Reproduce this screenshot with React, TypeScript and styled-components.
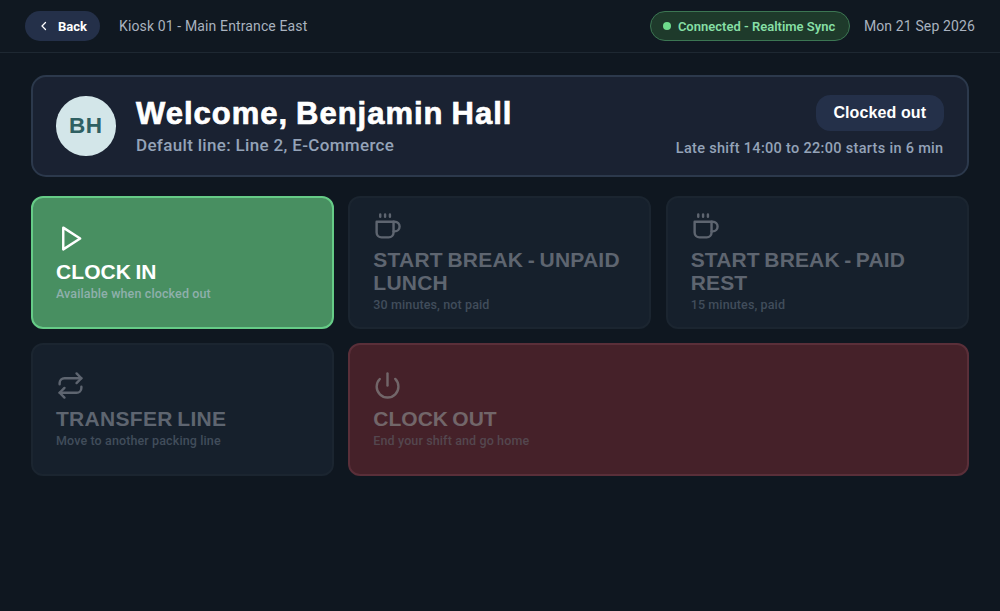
import type { ReactNode } from "react";
import styled, { createGlobalStyle } from "styled-components";

const GlobalStyle = createGlobalStyle`
  * {
    box-sizing: border-box;
  }

  body {
    margin: 0;
    background: #0f1720;
    font-family: Roboto, "Noto Sans", sans-serif;
    color: #ffffff;
  }
`;

const Page = styled.div`
  min-height: 100vh;
  overflow: hidden;
`;

const TopBar = styled.header`
  display: flex;
  align-items: center;
  justify-content: space-between;
  height: 53px;
  padding: 0 25px;
  background: #101821;
  border-bottom: 1px solid #1e2832;
`;

const TopBarGroup = styled.div<{ $gap: number }>`
  display: flex;
  align-items: center;
  gap: ${({ $gap }) => $gap}px;
`;

const BackButton = styled.button`
  display: flex;
  align-items: center;
  gap: 8px;
  width: 75px;
  height: 30px;
  padding: 0 0 0 13px;
  border: none;
  border-radius: 15px;
  background: #243049;
  color: #ffffff;
  font-family: inherit;
  font-size: 13px;
  font-weight: 700;
`;

const TopBarText = styled.span`
  color: #a9b2bf;
  font-size: 14px;
  letter-spacing: 0.13px;
  white-space: nowrap;
`;

const SyncBadge = styled.div`
  display: flex;
  align-items: center;
  gap: 7px;
  width: 200px;
  height: 30px;
  padding-left: 12px;
  border: 1px solid #3c7653;
  border-radius: 15px;
  background: #1e3a2b;
  color: #86dfa5;
  font-size: 13px;
  font-weight: 600;
  white-space: nowrap;
`;

const SyncDot = styled.span`
  width: 8px;
  height: 8px;
  border-radius: 50%;
  background: #6fdc8c;
`;

const Main = styled.main`
  display: flex;
  flex-direction: column;
  gap: 19px;
  padding: 22px 31.5px 0 31px;
`;

const WelcomeCard = styled.section`
  display: flex;
  align-items: center;
  justify-content: space-between;
  height: 102px;
  padding: 0 23px;
  border: 2px solid #2c394c;
  border-radius: 15px;
  background: #1a2232;
`;

const Person = styled.div`
  display: flex;
  align-items: center;
  gap: 20.5px;
`;

const Avatar = styled.div`
  display: flex;
  align-items: center;
  justify-content: center;
  width: 59.5px;
  height: 59.5px;
  border-radius: 50%;
  background: #d3e6e9;
  color: #2f6062;
  font-family: "Liberation Sans", sans-serif;
  font-size: 22.5px;
  font-weight: 700;
  letter-spacing: 0.6px;
`;

const Greeting = styled.h1`
  margin: 0;
  font-family: "Liberation Sans", sans-serif;
  font-size: 31px;
  font-weight: 700;
  line-height: 36px;
  letter-spacing: 0.98px;
  word-spacing: -1.5px;
  -webkit-text-stroke: 0.7px #ffffff;
  white-space: nowrap;
`;

const DefaultLine = styled.p`
  margin: 1px 0 0;
  color: #94a3b8;
  font-size: 17px;
  font-weight: 500;
  line-height: 24px;
  letter-spacing: 0.33px;
  white-space: nowrap;
`;

const Status = styled.div`
  display: flex;
  flex-direction: column;
  align-items: flex-end;
  gap: 8px;
`;

const StatusPill = styled.div`
  display: flex;
  align-items: center;
  justify-content: center;
  width: 127.5px;
  height: 36px;
  border-radius: 14.5px;
  background: #243049;
  font-family: "Liberation Sans", sans-serif;
  font-size: 16px;
  font-weight: 700;
  letter-spacing: 0.1px;
`;

const ShiftNote = styled.p`
  margin: 0;
  padding-top: 1px;
  color: #94a3b8;
  font-size: 14.5px;
  font-weight: 500;
  line-height: 18px;
  letter-spacing: 0.31px;
  white-space: nowrap;
`;

const ActionGrid = styled.div`
  display: grid;
  grid-template-columns: repeat(3, 1fr);
  grid-auto-rows: 132.5px;
  gap: 14.5px;
`;

const tones = {
  primary: {
    background: "#488f61",
    border: "#66cc87",
    title: "#ffffff",
    hint: "#8fb0ac",
  },
  muted: {
    background: "#16202c",
    border: "#1b2530",
    title: "#5e6570",
    hint: "#414d5b",
  },
  danger: {
    background: "#452129",
    border: "#5a2f39",
    title: "#726669",
    hint: "#54474f",
  },
};

type Tone = keyof typeof tones;

const Tile = styled.button<{ $tone: Tone; $wide?: boolean }>`
  display: flex;
  flex-direction: column;
  align-items: flex-start;
  justify-content: center;
  grid-column: span ${({ $wide }) => ($wide ? 2 : 1)};
  padding: 1px 23px 0;
  border: 2px solid ${({ $tone }) => tones[$tone].border};
  border-radius: 12px;
  background: ${({ $tone }) => tones[$tone].background};
  color: ${({ $tone }) => tones[$tone].title};
  text-align: left;
`;

const TileIcon = styled.svg`
  width: 29px;
  height: 29px;
  margin-bottom: 7px;
  fill: none;
  stroke: currentColor;
  stroke-width: 2;
  stroke-linecap: round;
  stroke-linejoin: round;
`;

const TileTitle = styled.span<{ $spacing: number }>`
  font-family: "Liberation Sans", sans-serif;
  font-size: 21px;
  font-weight: 700;
  line-height: 23px;
  letter-spacing: ${({ $spacing }) => $spacing}px;
  word-spacing: -1.5px;
`;

const TileHint = styled.span<{ $tone: Tone }>`
  margin-top: 2px;
  color: ${({ $tone }) => tones[$tone].hint};
  font-family: Roboto, "Noto Sans", sans-serif;
  font-size: 12.5px;
  font-weight: 500;
  line-height: 17px;
  letter-spacing: 0.12px;
`;

const playIcon = <path d="M6 3l14 9-14 9V3z" />;

const cupIcon = (
  <>
    <path d="M6 2v2M10 2v2M14 2v2" />
    <path d="M17 8h1a4 4 0 1 1 0 8h-1" />
    <path d="M3 8h14v9a4 4 0 0 1-4 4H7a4 4 0 0 1-4-4V8z" />
  </>
);

const repeatIcon = (
  <>
    <path d="m17 2 4 4-4 4" />
    <path d="M3 11v-1a4 4 0 0 1 4-4h14" />
    <path d="m7 22-4-4 4-4" />
    <path d="M21 13v1a4 4 0 0 1-4 4H3" />
  </>
);

const powerIcon = (
  <>
    <path d="M12 2v10" />
    <path d="M18.4 6.6a9 9 0 1 1-12.77.04" />
  </>
);

interface Action {
  title: string;
  hint: string;
  icon: ReactNode;
  tone: Tone;
  spacing: number;
  wide?: boolean;
}

const actions: Action[] = [
  { title: "CLOCK IN", hint: "Available when clocked out", icon: playIcon, tone: "primary", spacing: 0.07 },
  { title: "START BREAK - UNPAID LUNCH", hint: "30 minutes, not paid", icon: cupIcon, tone: "muted", spacing: 0.22 },
  { title: "START BREAK - PAID REST", hint: "15 minutes, paid", icon: cupIcon, tone: "muted", spacing: 0.15 },
  { title: "TRANSFER LINE", hint: "Move to another packing line", icon: repeatIcon, tone: "muted", spacing: 0.29 },
  { title: "CLOCK OUT", hint: "End your shift and go home", icon: powerIcon, tone: "danger", spacing: 0, wide: true },
];

const ChevronLeft = () => (
  <svg width="12" height="12" viewBox="0 0 24 24" fill="none" stroke="currentColor" strokeWidth="2.6" strokeLinecap="round" strokeLinejoin="round">
    <path d="m15 19-7-7 7-7" />
  </svg>
);

export default function App() {
  return (
    <Page>
      <GlobalStyle />
      <TopBar>
        <TopBarGroup $gap={19}>
          <BackButton>
            <ChevronLeft />
            Back
          </BackButton>
          <TopBarText>Kiosk 01 - Main Entrance East</TopBarText>
        </TopBarGroup>
        <TopBarGroup $gap={14}>
          <SyncBadge>
            <SyncDot />
            Connected - Realtime Sync
          </SyncBadge>
          <TopBarText>Mon 21 Sep 2026</TopBarText>
        </TopBarGroup>
      </TopBar>

      <Main>
        <WelcomeCard>
          <Person>
            <Avatar>BH</Avatar>
            <div>
              <Greeting>Welcome, Benjamin Hall</Greeting>
              <DefaultLine>Default line: Line 2, E-Commerce</DefaultLine>
            </div>
          </Person>
          <Status>
            <StatusPill>Clocked out</StatusPill>
            <ShiftNote>Late shift 14:00 to 22:00 starts in 6 min</ShiftNote>
          </Status>
        </WelcomeCard>

        <ActionGrid>
          {actions.map(({ title, hint, icon, tone, spacing, wide }) => (
            <Tile key={title} $tone={tone} $wide={wide}>
              <TileIcon viewBox="0 0 24 24">{icon}</TileIcon>
              <TileTitle $spacing={spacing}>{title}</TileTitle>
              <TileHint $tone={tone}>{hint}</TileHint>
            </Tile>
          ))}
        </ActionGrid>
      </Main>
    </Page>
  );
}
